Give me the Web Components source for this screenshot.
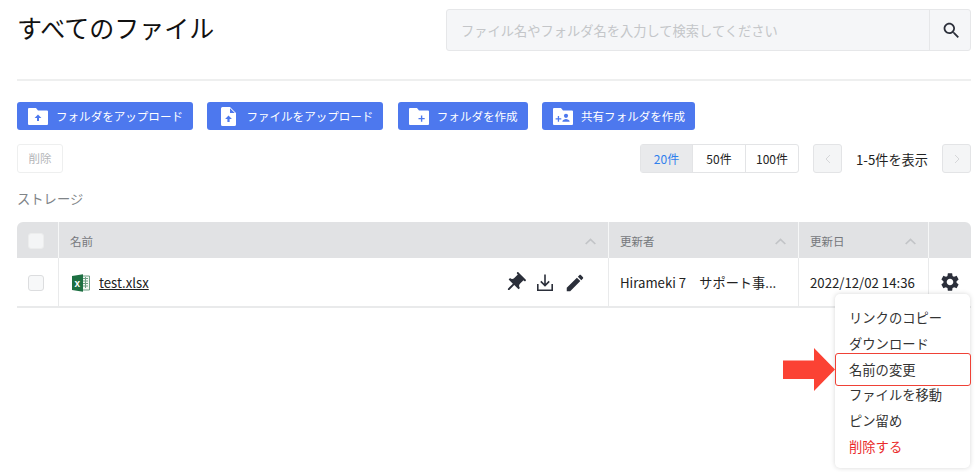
<!DOCTYPE html>
<html lang="ja">
<head>
<meta charset="utf-8">
<title>すべてのファイル</title>
<style>
  html, body { margin: 0; padding: 0; background: #fff; }
  body { font-family: "Noto Sans CJK JP", "Noto Sans", sans-serif; color: #222; overflow: hidden; }
</style>
</head>
<body>
<file-page>
  <page-header heading="すべてのファイル"></page-header>
  <action-bar>
    <action-button icon="folder-up">フォルダをアップロード</action-button>
    <action-button icon="file-up">ファイルをアップロード</action-button>
    <action-button icon="folder-plus">フォルダを作成</action-button>
    <action-button icon="folder-share">共有フォルダを作成</action-button>
  </action-bar>
  <list-toolbar></list-toolbar>
  <section-label>ストレージ</section-label>
  <file-table></file-table>
  <context-menu slot="overlay"></context-menu>
  <pointer-arrow slot="overlay"></pointer-arrow>
</file-page>

<script>
const ICONS = {
    'folder-up': '<svg width="20" height="17" viewBox="0 0 20 17"><path fill="#fff" d="M1 0h7l2 2.500h9a1 1 0 0 1 1 1V16a1 1 0 0 1-1 1H1a1 1 0 0 1-1-1V1a1 1 0 0 1 1-1z"/><path fill="#4d78ee" d="M10 6.500l3.400 3.400h-2.400V13H9V9.900H6.600z"/></svg>',
    'file-up': '<svg width="15" height="19" viewBox="0 0 15 19"><path fill="#fff" d="M1.500 0H9l6 6v11.500a1.500 1.500 0 0 1-1.500 1.500h-12A1.500 1.500 0 0 1 0 17.500v-16A1.500 1.500 0 0 1 1.500 0z"/><path fill="#4d78ee" d="M9 1.200V6h4.800zM7.500 8.500l3.400 3.400H8.600V15H6.400v-3.100H4.100z"/></svg>',
    'folder-plus': '<svg width="20" height="17" viewBox="0 0 20 17"><path fill="#fff" d="M1 0h7l2 2.500h9a1 1 0 0 1 1 1V16a1 1 0 0 1-1 1H1a1 1 0 0 1-1-1V1a1 1 0 0 1 1-1z"/><path fill="#4d78ee" d="M11.900 7.500h1.400v2.400h2.400v1.400h-2.400v2.400h-1.400v-2.400H9.500V9.900h2.400z"/></svg>',
    'folder-share': '<svg width="20" height="17" viewBox="0 0 20 17"><path fill="#fff" d="M1 0h7l2 2.500h9a1 1 0 0 1 1 1V16a1 1 0 0 1-1 1H1a1 1 0 0 1-1-1V1a1 1 0 0 1 1-1z"/><path fill="#4d78ee" d="M4.800 8h1.300v2.200h2.200v1.300H6.100v2.200H4.800v-2.200H2.600v-1.300h2.200z"/><circle fill="#4d78ee" cx="13" cy="7.800" r="2.100"/><path fill="#4d78ee" d="M9.300 13.700c0-1.800 2.500-2.600 3.700-2.600s3.700.8 3.700 2.600z"/></svg>',
    search: '<svg width="21" height="21" viewBox="0 0 24 24"><path fill="#2b2f3a" d="M15.500 14h-.79l-.28-.27C15.410 12.590 16 11.110 16 9.500 16 5.910 13.090 3 9.500 3S3 5.910 3 9.500 5.910 16 9.500 16c1.610 0 3.090-.59 4.230-1.570l.27.28v.79l5 4.990L20.490 19l-4.990-5zm-6 0C7.010 14 5 11.990 5 9.500S7.010 5 9.500 5 14 7.010 14 9.500 11.990 14 9.500 14z"/></svg>',
    pin: '<svg width="24" height="24" viewBox="0 0 24 24"><path fill="#2b2f3a" transform="rotate(45 12 12)" d="M16 9V4h1c.55 0 1-.45 1-1s-.45-1-1-1H7c-.55 0-1 .45-1 1s.45 1 1 1h1v5c0 1.660-1.340 3-3 3v2h5.970v7l1 1 1-1v-7H19v-2c-1.660 0-3-1.340-3-3z"/></svg>',
    download: '<svg width="16" height="17" viewBox="0 0 16 17"><path fill="none" stroke="#2b2f3a" stroke-width="1.600" d="M.8 10v6.200h14.400V10M8 .5v11M3.800 7.400L8 11.600l4.200-4.200"/></svg>',
    edit: '<svg width="22" height="22" viewBox="0 0 24 24"><path fill="#2b2f3a" d="M3 17.250V21h3.750L17.810 9.940l-3.750-3.750L3 17.250zM20.710 7.040c.39-.39.39-1.020 0-1.410l-2.340-2.340c-.39-.39-1.020-.39-1.410 0l-1.830 1.830 3.750 3.750 1.830-1.830z"/></svg>',
    gear: '<svg width="22" height="22" viewBox="0 0 24 24"><path fill="#2b2f3a" d="M19.140 12.940c.04-.3.060-.61.060-.94 0-.32-.02-.64-.07-.94l2.030-1.580c.18-.14.230-.41.120-.61l-1.920-3.320c-.12-.22-.37-.29-.59-.22l-2.390.96c-.5-.38-1.030-.7-1.620-.94l-.36-2.540c-.04-.24-.24-.41-.48-.41h-3.840c-.24 0-.43.17-.47.41l-.36 2.540c-.59.24-1.130.57-1.620.94l-2.390-.96c-.22-.08-.47 0-.59.22L2.740 8.870c-.12.21-.08.47.12.61l2.030 1.580c-.05.3-.09.63-.09.94s.02.64.07.94l-2.030 1.580c-.18.14-.23.41-.12.61l1.920 3.320c.12.22.37.29.59.22l2.390-.96c.5.38 1.030.7 1.620.94l.36 2.54c.05.24.24.41.48.41h3.840c.24 0 .44-.17.47-.41l.36-2.540c.59-.24 1.130-.56 1.620-.94l2.390.96c.22.08.47 0 .59-.22l1.920-3.320c.12-.22.070-.47-.12-.61l-2.010-1.580zM12 15.600c-1.980 0-3.600-1.620-3.600-3.600s1.620-3.600 3.600-3.600 3.600 1.620 3.600 3.600-1.620 3.600-3.600 3.600z"/></svg>',
    excel: '<svg width="18" height="18" viewBox="0 0 18 18"><path fill="#f4f8f5" stroke="#6f9f84" d="M8 2h9.500v14H8z"/><path stroke="#6f9f84" d="M11 4.500h5M11 7h5M11 9.500h5M11 12h5M13.500 3v11"/><path fill="#1d6f42" d="M0 2L11 .2v17.600L0 16z"/><text x="5.300" y="12.500" font-size="10" font-weight="700" fill="#fff" text-anchor="middle" font-family="Liberation Sans, sans-serif">x</text></svg>',
    chevron: '<svg width="11" height="7" viewBox="0 0 11 7"><path fill="none" stroke="#c2c4c7" stroke-width="1.700" d="M.7 6l4.800-4.500L10.300 6"/></svg>'
};

class FilePage extends HTMLElement {
    constructor(){
        super();
        this.attachShadow({ mode: 'open' });
    }
    connectedCallback(){
        this.shadowRoot.innerHTML = `
        <style>
            :host { display: block; position: relative; width: 980px; height: 472px; box-sizing: border-box; padding: 0 9px 0 17px; overflow: hidden; }
        </style>
        <slot></slot>
        <slot name="overlay"></slot>`;
    }
}

class PageHeader extends HTMLElement {
    constructor(){
        super();
        this.attachShadow({ mode: 'open' });
    }
    connectedCallback(){
        this.shadowRoot.innerHTML = `
        <style>
            :host { display: flex; justify-content: space-between; height: 81px; box-sizing: border-box; border-bottom: 2px solid #eeefef; padding-top: 9px; }
            h1 { margin: 0; font-size: 25px; font-weight: 400; line-height: 36px; color: #111; }
            .search { display: flex; width: 525px; height: 42px; box-sizing: border-box; background: #f5f6f8; border: 1px solid #e6e7e9; border-radius: 3px; }
            .field { flex: 1; padding-left: 14px; font-size: 13.250px; line-height: 41px; color: #c4c6c9; }
            .btn { width: 41px; box-sizing: border-box; padding-left: 2px; display: flex; align-items: center; justify-content: center; border-left: 1px solid #e6e7e9; }
        </style>
        <h1>${this.getAttribute('heading')}</h1>
        <div class="search">
            <div class="field">ファイル名やフォルダ名を入力して検索してください</div>
            <div class="btn">${ICONS.search}</div>
        </div>`;
    }
}

class ActionBar extends HTMLElement {
    constructor(){
        super();
        this.attachShadow({ mode: 'open' });
    }
    connectedCallback(){
        this.shadowRoot.innerHTML = `
        <style>
            :host { display: flex; gap: 14.400px; margin-top: 21px; }
        </style>
        <slot></slot>`;
    }
}

class ActionButton extends HTMLElement {
    constructor(){
        super();
        this.attachShadow({ mode: 'open' });
    }
    connectedCallback(){
        this.shadowRoot.innerHTML = `
        <style>
            :host { display: flex; align-items: center; gap: 8px; height: 28px; padding: 0 10px 0 11px; background: #4d78ee; color: #fff; border-radius: 3px; font-size: 11.550px; white-space: nowrap; }
            .i { display: flex; width: 20px; justify-content: center; }
        </style>
        <span class="i">${ICONS[this.getAttribute('icon')]}</span><slot></slot>`;
    }
}

class ListToolbar extends HTMLElement {
    constructor(){
        super();
        this.attachShadow({ mode: 'open' });
    }
    connectedCallback(){
        this.shadowRoot.innerHTML = `
        <style>
            :host { display: flex; align-items: stretch; height: 29px; margin-top: 14px; font-size: 12px; }
            .del { width: 46px; box-sizing: border-box; border: 1px solid #eeefef; border-radius: 3px; color: #b4b6b9; font-size: 11.500px; line-height: 27px; text-align: center; margin-right: auto; }
            .sizes { display: flex; border: 1px solid #e3e4e6; border-radius: 3px; margin-right: 14px; }
            .sizes span { width: 52px; text-align: center; line-height: 27px; color: #222; border-left: 1px solid #e3e4e6; }
            .sizes span:first-child { width: 51px; border-left: 0; background: #e9eaec; color: #2f80ed; }
            .nav { width: 29px; box-sizing: border-box; display: flex; align-items: center; justify-content: center; background: #f4f5f6; border: 1px solid #e3e4e6; border-radius: 3px; }
            .count { width: 100px; text-align: center; font-size: 13.200px; line-height: 32px; color: #222; }
        </style>
        <div class="del">削除</div>
        <div class="sizes"><span>20件</span><span>50件</span><span>100件</span></div>
        <div class="nav"><svg width="6" height="10" viewBox="0 0 6 10"><path fill="none" stroke="#d6d7d9" d="M5 1L1 5l4 4"/></svg></div>
        <div class="count">1-5件を表示</div>
        <div class="nav"><svg width="6" height="10" viewBox="0 0 6 10"><path fill="none" stroke="#d6d7d9" d="M1 1l4 4-4 4"/></svg></div>`;
    }
}

class SectionLabel extends HTMLElement {
    constructor(){
        super();
        this.attachShadow({ mode: 'open' });
    }
    connectedCallback(){
        this.shadowRoot.innerHTML = `
        <style>
            :host { display: block; margin-top: 16px; height: 20px; font-size: 13.300px; line-height: 20px; color: #808488; }
        </style>
        <slot></slot>`;
    }
}

class FileTable extends HTMLElement {
    constructor(){
        super();
        this.attachShadow({ mode: 'open' });
    }
    connectedCallback(){
        this.shadowRoot.innerHTML = `
        <style>
            :host { display: block; margin-top: 13px; }
            .row { display: grid; grid-template-columns: 41px 550px 190px 130px 43px; }
            .head { height: 36px; background: #e1e2e4; border-radius: 6px 6px 0 0; color: #75787c; font-size: 11.500px; }
            .body { height: 50px; box-sizing: border-box; border-bottom: 2px solid #e9eaeb; font-size: 13.200px; color: #222; }
            .c { display: flex; align-items: center; padding: 0 11px; border-left: 1px solid #e9eaeb; min-width: 0; box-sizing: border-box; white-space: nowrap; }
            .head .c { border-left-color: #f6f7f7; justify-content: space-between; padding-top: 2px; }
            .body .c { padding-top: 1px; }
            .c:first-child { border-left: 0; justify-content: center; padding-left: 0; padding-right: 3px; }
            .box { width: 16px; height: 16px; box-sizing: border-box; border: 1px solid #dcdddf; border-radius: 3px; background: #f7f8f9; }
            .head .box { background: #f4f5f6; border-color: #eceded; }
            .chev { display: flex; margin-right: 1px; }
            .xl { display: flex; margin-left: 2px; }
            a { color: #222; text-decoration: underline; margin-left: 9px; font-size: 13.200px; }
            .tools { display: flex; align-items: center; margin-left: auto; margin-right: 11px; }
            .tools span, .gear { display: flex; }
            .tools .dl { margin: 0 11px 0 10px; }
            .gear { margin: auto; }
            .body .last { padding: 0; }
        </style>
        <div class="row head">
            <div class="c"><div class="box"></div></div>
            <div class="c"><span>名前</span><span class="chev">${ICONS.chevron}</span></div>
            <div class="c"><span>更新者</span><span class="chev">${ICONS.chevron}</span></div>
            <div class="c"><span>更新日</span><span class="chev">${ICONS.chevron}</span></div>
            <div class="c"></div>
        </div>
        <div class="row body">
            <div class="c"><div class="box"></div></div>
            <div class="c"><span class="xl">${ICONS.excel}</span><a>test.xlsx</a>
                <div class="tools"><span>${ICONS.pin}</span><span class="dl">${ICONS.download}</span><span>${ICONS.edit}</span></div>
            </div>
            <div class="c"><span>Hirameki 7　サポート事...</span></div>
            <div class="c"><span>2022/12/02 14:36</span></div>
            <div class="c last"><span class="gear">${ICONS.gear}</span></div>
        </div>`;
    }
}

class ContextMenu extends HTMLElement {
    constructor(){
        super();
        this.attachShadow({ mode: 'open' });
    }
    connectedCallback(){
        const items = ['リンクのコピー', 'ダウンロード', '名前の変更', 'ファイルを移動', 'ピン留め', '削除する'];
        this.shadowRoot.innerHTML = `
        <style>
            :host { position: absolute; left: 835px; top: 294px; width: 135px; height: 174px; box-sizing: border-box; padding-top: 11px; background: #fff; border-radius: 5px; box-shadow: 0 0 5px rgba(0,0,0,.16); font-size: 13.300px; color: #333; }
            div { height: 25.800px; line-height: 25.800px; padding-left: 14px; box-sizing: border-box; }
            .on { position: relative; }
            .on::after { content: ''; position: absolute; left: 0; right: -1px; top: -4px; bottom: -4px; border: 1px solid #ef4136; border-radius: 3px; }
            .del { color: #ea2a2a; }
        </style>
        ${items.map((t, i) => `<div class="${i === 2 ? 'on' : i === 5 ? 'del' : ''}">${t}</div>`).join('')}`;
    }
}

class PointerArrow extends HTMLElement {
    constructor(){
        super();
        this.attachShadow({ mode: 'open' });
    }
    connectedCallback(){
        this.shadowRoot.innerHTML = `
        <style>
            :host { position: absolute; left: 783px; top: 348px; display: block; width: 52px; height: 43px; }
            svg { display: block; }
        </style>
        <svg width="52" height="43" viewBox="0 0 52 43"><path fill="#fb4234" d="M0 12.500h31V0l21 21.500L31 43V31H0z"/></svg>`;
    }
}

customElements.define('file-page', FilePage);
customElements.define('page-header', PageHeader);
customElements.define('action-bar', ActionBar);
customElements.define('action-button', ActionButton);
customElements.define('list-toolbar', ListToolbar);
customElements.define('section-label', SectionLabel);
customElements.define('file-table', FileTable);
customElements.define('context-menu', ContextMenu);
customElements.define('pointer-arrow', PointerArrow);
</script>
</body>
</html>
